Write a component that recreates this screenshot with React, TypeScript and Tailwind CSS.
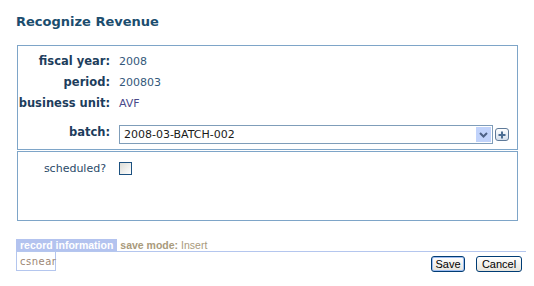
import React, { useState } from 'react';

const labelCls = 'text-right font-bold text-[11.5px] text-[#1d3d5c]';
const valueCls = 'text-[#34587a]';

export default function App() {
    const [batch, setBatch] = useState('2008-03-BATCH-002');
    const [scheduled, setScheduled] = useState(false);

    return (
        <div className="w-[534px] h-[286px] bg-white pl-4 pt-[14px] font-['DejaVu_Sans',Verdana,sans-serif] text-[11px] leading-[13px]">
            <h1 className="text-[13px] leading-4 font-bold text-[#1b4d6e]">Recognize Revenue</h1>

            <div className="mt-[15px] ml-px w-[501px]">
                {/* main fields */}
                <div className="border border-[#7ea5c8] pt-[9px] pb-[5px]">
                    <div className="grid grid-cols-[92px_1fr] gap-x-[9px] gap-y-2 items-start">
                        <div className={labelCls}>fiscal year:</div>
                        <div className={valueCls}>2008</div>
                        <div className={labelCls}>period:</div>
                        <div className={valueCls}>200803</div>
                        <div className={labelCls}>business unit:</div>
                        <div className="text-[#4a4a8a]">AVF</div>
                        <div className={`${labelCls} mt-[8px]`}>batch:</div>
                        <div className="mt-[7px] flex items-center gap-[2px]">
                            <div className="relative w-[374px] h-[19px] border border-[#7f9db9] bg-white flex items-center">
                                <span className="pl-1 text-[#1a1a1a]">{batch}</span>
                                <div className="absolute right-px top-px w-[15px] h-[15px] bg-[#c1d3fb] flex items-center justify-center">
                                    <svg width="9" height="6" viewBox="0 0 9 6">
                                        <path d="M1 1 L4.5 4.5 L8 1" stroke="#4d6185" strokeWidth="2" fill="none" />
                                    </svg>
                                </div>
                                <select
                                    className="absolute inset-0 opacity-0"
                                    value={batch}
                                    onChange={(e) => setBatch(e.target.value)}
                                >
                                    <option>2008-03-BATCH-001</option>
                                    <option>2008-03-BATCH-002</option>
                                </select>
                            </div>
                            <button className="w-[14px] h-[13px] rounded-[3px] border border-[#5f7a99] bg-gradient-to-b from-white to-[#d5dfec] flex items-center justify-center">
                                <svg width="8" height="8" viewBox="0 0 8 8">
                                    <path d="M4 0.5 V7.5 M0.5 4 H7.5" stroke="#4c6d92" strokeWidth="2" />
                                </svg>
                            </button>
                        </div>
                    </div>
                </div>

                {/* options */}
                <div className="mt-px h-[70px] border border-[#7ea5c8] pt-[10px]">
                    <div className="grid grid-cols-[88px_1fr] gap-x-[13px] items-center">
                        <div className="text-right text-[#2a4a68]">scheduled?</div>
                        <button
                            onClick={() => setScheduled(!scheduled)}
                            className="w-[13px] h-[13px] border border-[#1c5180] bg-gradient-to-br from-[#dcdcd6] to-white flex items-center justify-center"
                        >
                            {scheduled && <span className="text-[10px] leading-none text-[#21a121]">✓</span>}
                        </button>
                    </div>
                </div>
            </div>

            {/* record information */}
            <div className="mt-[18px] w-[510px] font-['Liberation_Sans',Tahoma,sans-serif]">
                <div className="flex items-end border-b border-[#b4c6ee] h-[13px]">
                    <div className="h-[12px] bg-[#b3c3ef] px-1 text-white font-bold text-[10.5px] leading-[12px]">record information</div>
                    <div className="pl-[3px] text-[10.5px] leading-[12px] text-[#a99a7c]">
                        <span className="font-bold">save mode:</span> Insert
                    </div>
                </div>
                <div className="flex justify-between items-start">
                    <div className="w-[40px] h-[19px] border-x border-b border-[#b4c6ee] pl-[3px] pt-[4px] font-['DejaVu_Sans',Verdana,sans-serif] text-[10px] leading-[11px] tracking-[0.5px] text-[#9c8674]">
                        csnear
                    </div>
                    <div className="mt-[4px] mr-1 flex gap-[11px] text-[11px] text-black">
                        <button className="w-[34px] h-[16px] rounded-[3px] border border-[#003c74] bg-gradient-to-b from-white to-[#e6e4dc] shadow-[inset_0_0_0_1px_#9fbdf0] leading-[14px]">
                            Save
                        </button>
                        <button className="w-[46px] h-[16px] rounded-[3px] border border-[#003c74] bg-gradient-to-b from-white to-[#e6e4dc] leading-[14px]">
                            Cancel
                        </button>
                    </div>
                </div>
            </div>
        </div>
    );
}
